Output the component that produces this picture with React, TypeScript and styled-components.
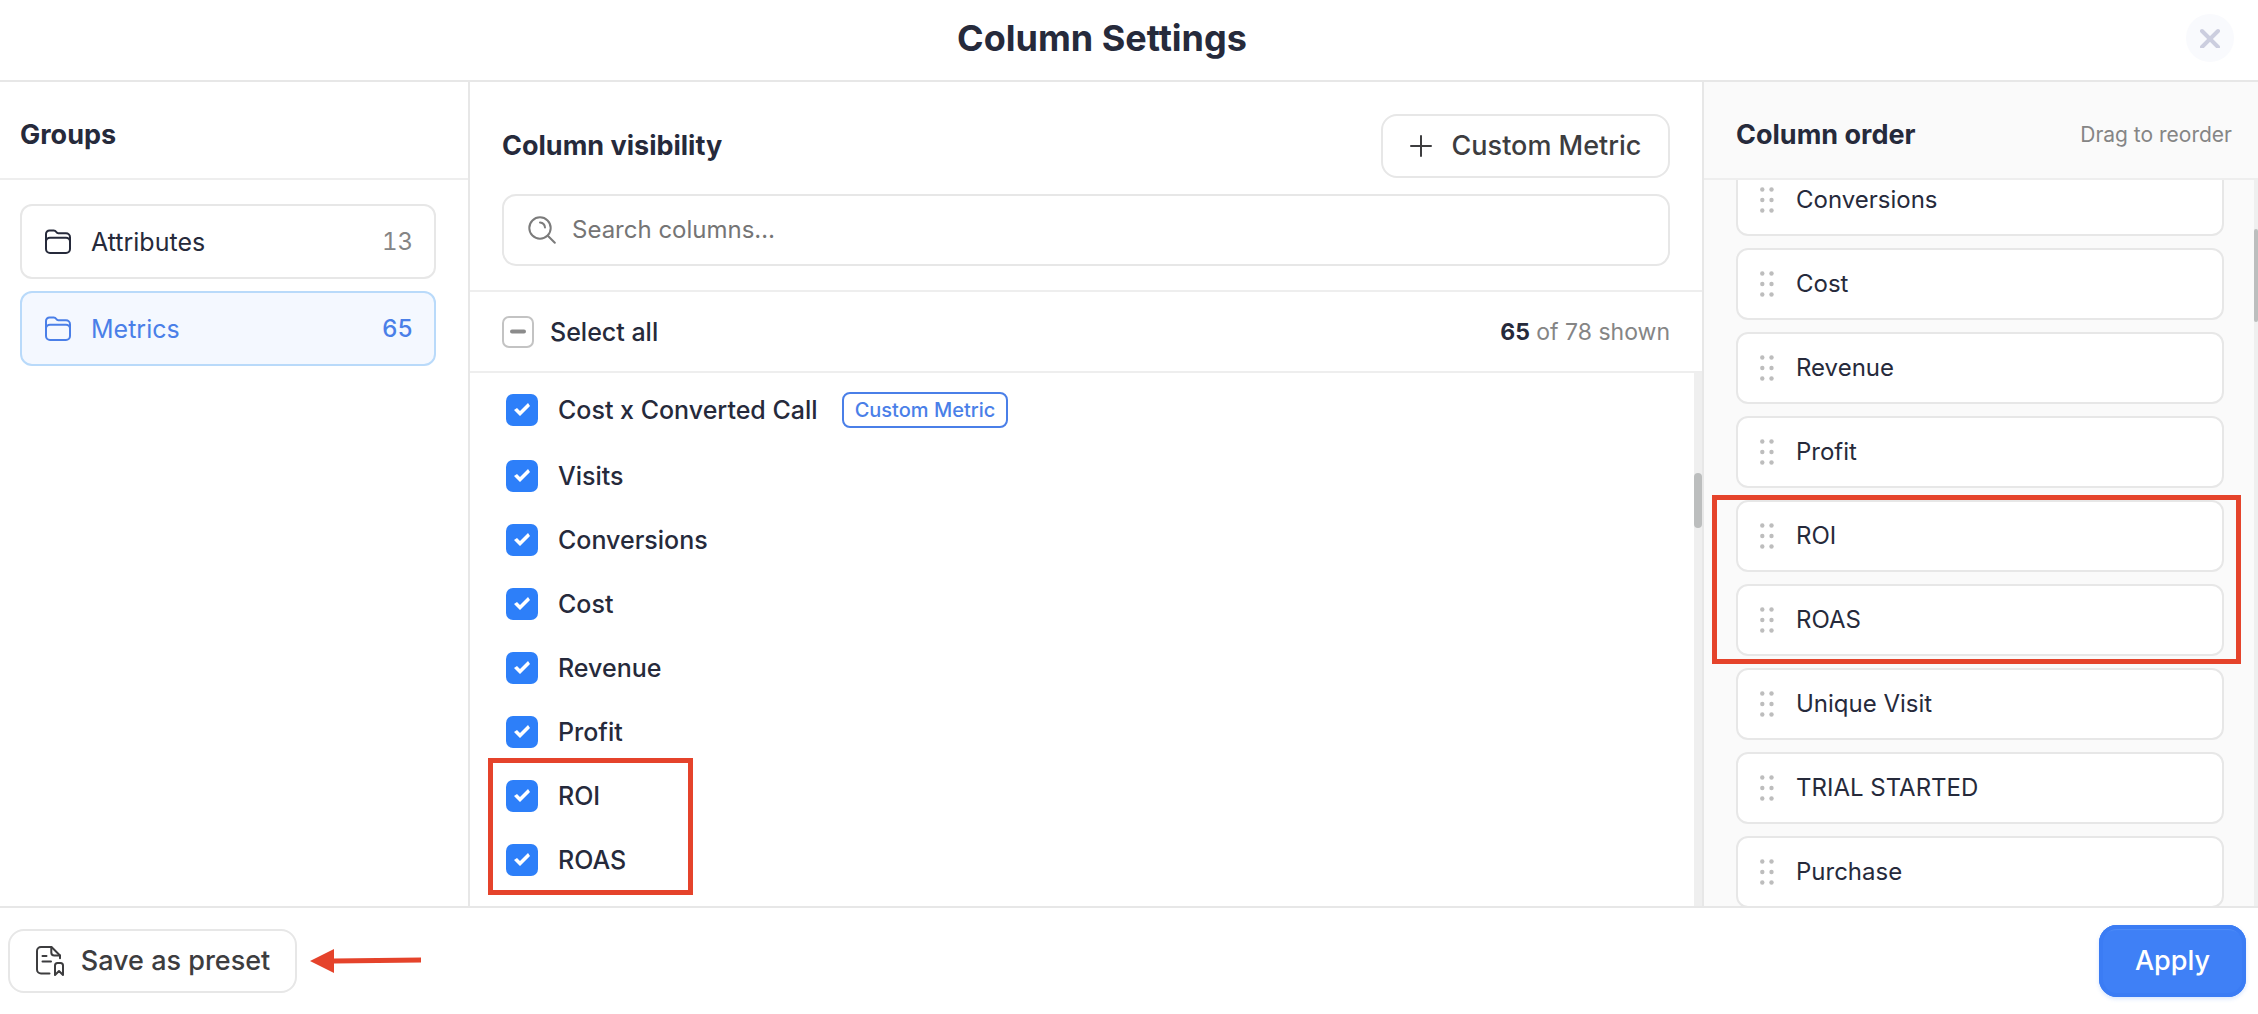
import React, { useEffect, useRef, useState } from 'react';
import styled, { createGlobalStyle, css } from 'styled-components';

const ink = '#262a3b';
const muted = '#858585';
const line = '#e7e7e7';
const softLine = '#eeeeee';
const blue = '#4a7fe8';
const callout = '#e5432b';

const GlobalStyle = createGlobalStyle`
  *, *::before, *::after { box-sizing: border-box; }
  body { margin: 0; background: #fff; }
  body, button, input {
    font-family: Inter, "Liberation Sans", sans-serif;
    color: ${ink};
  }
  h1, h2, ul { margin: 0; padding: 0; }
  ul { list-style: none; }
`;

const Dialog = styled.main`
  display: flex;
  flex-direction: column;
  height: 100vh;
  overflow: hidden;
  background: #fff;
`;

const Header = styled.header`
  display: flex;
  align-items: center;
  flex: none;
  height: 82px;
  padding: 0 24px 4px 18px;
  border-bottom: 2px solid ${line};
`;

const Title = styled.h1`
  flex: 1;
  font-size: 36px;
  line-height: 44px;
  font-weight: 700;
  text-align: center;
`;

const CloseButton = styled.button`
  display: grid;
  place-items: center;
  width: 48px;
  height: 48px;
  padding: 0;
  border: 0;
  border-radius: 50%;
  background: #f9fafd;
  color: #cccedf;
`;

const Body = styled.div`
  display: grid;
  grid-template-columns: 470px minmax(0, 1fr) 556px;
  flex: 1;
  min-height: 0;
`;

const Panel = styled.section<{ $side?: 'left' | 'right' }>`
  display: flex;
  flex-direction: column;
  min-width: 0;
  min-height: 0;
  ${p => p.$side === 'left' && css`border-right: 2px solid ${line};`}
  ${p => p.$side === 'right' && css`
    border-left: 2px solid ${line};
    background: #fafafa;
  `}
`;

const PanelHeader = styled.div<{ $inset: number }>`
  display: flex;
  align-items: center;
  justify-content: space-between;
  flex: none;
  height: 98px;
  padding: 10px 26px 0 ${p => p.$inset}px;
  border-bottom: 2px solid ${softLine};
`;

const Heading = styled.h2`
  font-size: 27px;
  line-height: 36px;
  font-weight: 650;
`;

const Hint = styled.span`
  font-size: 21px;
  line-height: 28px;
  color: ${muted};
`;

const GroupList = styled.nav`
  display: flex;
  flex-direction: column;
  gap: 12px;
  padding: 24px 32px 24px 20px;
`;

const GroupButton = styled.button<{ $active?: boolean }>`
  display: flex;
  align-items: center;
  gap: 20px;
  height: 75px;
  padding: 0 21px 0 23px;
  border: 2px solid ${p => (p.$active ? '#b9dafa' : line)};
  border-radius: 12px;
  background: ${p => (p.$active ? '#f4f8ff' : '#fff')};
  color: ${p => (p.$active ? blue : ink)};
  font-size: 25px;
  line-height: 32px;
  text-align: left;
`;

const GroupCount = styled.span<{ $active?: boolean }>`
  margin-left: auto;
  font-size: 24px;
  font-variant-numeric: tabular-nums;
  font-weight: ${p => (p.$active ? 500 : 400)};
  color: ${p => (p.$active ? blue : muted)};
`;

const Toolbar = styled.div`
  display: flex;
  flex-direction: column;
  gap: 16px;
  flex: none;
  padding: 32px 32px 24px;
  border-bottom: 2px solid ${softLine};
`;

const ToolbarRow = styled.div`
  display: flex;
  align-items: center;
  justify-content: space-between;
`;

const OutlineButton = styled.button<{ $gap: number }>`
  display: flex;
  align-items: center;
  justify-content: center;
  gap: ${p => p.$gap}px;
  width: 289px;
  height: 64px;
  padding: 0;
  border: 2px solid ${line};
  border-radius: 16px;
  background: #fff;
  color: #3d3d3f;
  font-size: 27px;
  line-height: 36px;
  font-weight: 500;
`;

const SearchBox = styled.label`
  display: flex;
  align-items: center;
  gap: 16px;
  height: 72px;
  padding: 0 24px;
  border: 2px solid ${line};
  border-radius: 14px;
  color: #7b7b7b;
`;

const SearchInput = styled.input`
  flex: 1;
  min-width: 0;
  padding: 0;
  border: 0;
  outline: 0;
  background: transparent;
  font-size: 24px;
  line-height: 32px;
  &::placeholder { color: #757575; opacity: 1; }
`;

const SelectRow = styled.div`
  display: flex;
  align-items: center;
  justify-content: space-between;
  flex: none;
  height: 81px;
  padding: 0 32px;
  border-bottom: 2px solid ${softLine};
`;

const CheckLabel = styled.label<{ $gap: number }>`
  display: inline-flex;
  align-items: center;
  gap: ${p => p.$gap}px;
  font-size: 25px;
  line-height: 32px;
  font-weight: 500;
`;

const Checkbox = styled.input.attrs({ type: 'checkbox' })`
  appearance: none;
  flex: none;
  width: 32px;
  height: 32px;
  margin: 0;
  border-radius: 7px;
  background: #fff;
  box-shadow: inset 0 0 0 2px #c3c3c3;
  &::after {
    content: '';
    display: block;
    width: 32px;
    height: 32px;
  }
  &:checked {
    background: #2d7ff9;
    box-shadow: none;
  }
  &:checked::after {
    background: #fff;
    clip-path: polygon(22px 9px, 24px 12px, 14px 22px, 8px 16px, 11px 14px, 14px 17px);
  }
  &:indeterminate::after {
    background: #8b8b8b;
    clip-path: inset(14px 8px round 2px);
  }
`;

const Shown = styled.span`
  font-size: 23px;
  line-height: 32px;
  color: ${muted};
  b { font-weight: 650; color: ${ink}; }
`;

const Scroller = styled.div`
  display: flex;
  justify-content: space-between;
  flex: 1;
  min-height: 0;
  overflow: hidden;
`;

const ScrollTrack = styled.div<{ $start: number; $width: number }>`
  flex: none;
  width: ${p => p.$width}px;
  padding-top: ${p => p.$start}px;
  background: #efefef;
`;

const ScrollThumb = styled.div<{ $length: number }>`
  height: ${p => p.$length}px;
  border-radius: 4px;
  background: #bcbebe;
`;

const MetricList = styled.ul`
  flex: 1;
  padding: 3px 36px 0;
`;

const MetricRow = styled.li`
  display: flex;
  align-items: center;
  gap: 24px;
  padding: 16px 0;
`;

const Badge = styled.span`
  padding: 0 11px;
  border: 2px solid ${blue};
  border-radius: 8px;
  font-size: 20px;
  line-height: 32px;
  font-weight: 500;
  color: ${blue};
`;

const MetricCallout = styled.div`
  position: relative;
  &::after {
    content: '';
    position: absolute;
    top: -6px;
    left: -18px;
    width: 205px;
    bottom: -3px;
    border: 5px solid ${callout};
    pointer-events: none;
  }
`;

const OrderList = styled.ul`
  flex: 1;
  display: flex;
  flex-direction: column;
  gap: 12px;
  margin-top: -16px;
  padding: 0 30px 0 32px;
`;

const OrderItem = styled.li`
  display: flex;
  align-items: center;
  flex: none;
  gap: 22px;
  height: 72px;
  padding: 0 22px;
  border: 2px solid ${line};
  border-radius: 12px;
  background: #fff;
  font-size: 24px;
  line-height: 32px;
`;

const OrderCallout = styled.div`
  position: relative;
  display: flex;
  flex-direction: column;
  gap: 12px;
  &::after {
    content: '';
    position: absolute;
    inset: -5px -17px -8px -24px;
    border: 5px solid ${callout};
    pointer-events: none;
  }
`;

const Footer = styled.footer`
  display: flex;
  align-items: center;
  gap: 12px;
  flex: none;
  height: 108px;
  padding: 0 12px 0 8px;
  border-top: 2px solid ${line};
`;

const ApplyButton = styled.button`
  width: 147px;
  height: 72px;
  margin-left: auto;
  padding: 0;
  border: 0;
  border-radius: 18px;
  background: #3f80f6;
  box-shadow: inset 0 0 0 4px #3b7cf4, inset 0 5px 1px #4f8cf8, 0 2px 4px #3f80f633;
  color: #fff;
  font-size: 27px;
  line-height: 36px;
  font-weight: 500;
`;

const FolderIcon = () => (
  <svg width="26" height="26" viewBox="0 0 26 26" fill="none" stroke="currentColor" strokeWidth="2" aria-hidden="true">
    <path d="M1 20V5a3.500 3.500 0 0 1 3.500-3.500h4.200c1.300 0 2 .6 2.600 1.500.5.800 1 1.200 2 1.200H21a4 4 0 0 1 4 4V20a4 4 0 0 1-4 4H5a4 4 0 0 1-4-4Z" />
    <path d="M1 12.500A4 4 0 0 1 5 8.700h16a4 4 0 0 1 4 3.800" />
  </svg>
);

const SearchIcon = () => (
  <svg width="28" height="28" viewBox="0 0 28 28" fill="none" stroke="currentColor" strokeWidth="2" strokeLinecap="round" aria-hidden="true">
    <circle cx="12" cy="12" r="10.700" />
    <path d="M12 6.500a5.500 5.500 0 0 1 5 5M19.800 19.800l7 7" />
  </svg>
);

const PlusIcon = () => (
  <svg width="22" height="22" viewBox="0 0 22 22" fill="none" stroke="currentColor" strokeWidth="2" strokeLinecap="round" aria-hidden="true">
    <path d="M11 1v20M1 11h20" />
  </svg>
);

const CloseIcon = () => (
  <svg width="20" height="20" viewBox="0 0 20 20" fill="none" stroke="currentColor" strokeWidth="4" strokeLinecap="round" aria-hidden="true">
    <path d="m2 3 16 16M18 3 2 19" />
  </svg>
);

const GripIcon = () => (
  <svg width="14" height="26" viewBox="0 0 14 26" fill="#bdbdbd" aria-hidden="true">
    {[2.5, 13, 23.5].map(y => (
      <React.Fragment key={y}>
        <circle cx="2.300" cy={y} r="2.200" />
        <circle cx="11.500" cy={y} r="2.200" />
      </React.Fragment>
    ))}
  </svg>
);

const PresetIcon = () => (
  <svg width="30" height="32" viewBox="0 0 30 32" fill="none" stroke="currentColor" strokeWidth="2" strokeLinecap="round" strokeLinejoin="round" aria-hidden="true">
    <path d="M14.500 28.500H6a4 4 0 0 1-4-4V6a4 4 0 0 1 4-4h10.500L25 10.500v2.800" />
    <path d="M16.300 2.300V7.500a3 3 0 0 0 3 3H25M7.500 11h4M7.500 16.500h8.500" />
    <path d="M20 30V20.500a2.500 2.500 0 0 1 2.500-2.500h3a2.500 2.500 0 0 1 2.500 2.500V30l-4-4Z" />
  </svg>
);

const ArrowMark = () => (
  <svg width="114" height="28" viewBox="0 0 114 28" fill={callout} aria-hidden="true">
    <path d="M1 14 25 2v9.500L112 10.500v5L25 16.500V26Z" />
  </svg>
);

function Metric({ name, custom }: { name: string; custom?: boolean }) {
  const [checked, setChecked] = useState(true);
  return (
    <MetricRow>
      <CheckLabel $gap={20}>
        <Checkbox checked={checked} onChange={e => setChecked(e.target.checked)} />
        {name}
      </CheckLabel>
      {custom && <Badge>Custom Metric</Badge>}
    </MetricRow>
  );
}

function Order({ name }: { name: string }) {
  return (
    <OrderItem draggable>
      <GripIcon />
      {name}
    </OrderItem>
  );
}

export default function App() {
  const selectAll = useRef<HTMLInputElement>(null);
  useEffect(() => {
    if (selectAll.current) selectAll.current.indeterminate = true;
  }, []);

  return (
    <Dialog>
      <GlobalStyle />
      <Header>
        <Title>Column Settings</Title>
        <CloseButton aria-label="Close"><CloseIcon /></CloseButton>
      </Header>
      <Body>
        <Panel $side="left">
          <PanelHeader $inset={20}><Heading>Groups</Heading></PanelHeader>
          <GroupList>
            <GroupButton><FolderIcon />Attributes<GroupCount>13</GroupCount></GroupButton>
            <GroupButton $active><FolderIcon />Metrics<GroupCount $active>65</GroupCount></GroupButton>
          </GroupList>
        </Panel>

        <Panel>
          <Toolbar>
            <ToolbarRow>
              <Heading>Column visibility</Heading>
              <OutlineButton $gap={20}><PlusIcon />Custom Metric</OutlineButton>
            </ToolbarRow>
            <SearchBox>
              <SearchIcon />
              <SearchInput type="text" placeholder="Search columns…" aria-label="Search columns" />
            </SearchBox>
          </Toolbar>
          <SelectRow>
            <CheckLabel $gap={16}>
              <Checkbox ref={selectAll} />
              Select all
            </CheckLabel>
            <Shown><b>65</b> of 78 shown</Shown>
          </SelectRow>
          <Scroller>
            <MetricList>
              <Metric name="Cost x Converted Call" custom />
              {['Visits', 'Conversions', 'Cost', 'Revenue', 'Profit'].map(n => <Metric key={n} name={n} />)}
              <li>
                <MetricCallout as="ul">
                  <Metric name="ROI" />
                  <Metric name="ROAS" />
                </MetricCallout>
              </li>
            </MetricList>
            <ScrollTrack $start={100} $width={8}><ScrollThumb $length={55} /></ScrollTrack>
          </Scroller>
        </Panel>

        <Panel $side="right">
          <PanelHeader $inset={32}>
            <Heading>Column order</Heading>
            <Hint>Drag to reorder</Hint>
          </PanelHeader>
          <Scroller>
            <OrderList>
              {['Conversions', 'Cost', 'Revenue', 'Profit'].map(n => <Order key={n} name={n} />)}
              <li>
                <OrderCallout as="ul">
                  <Order name="ROI" />
                  <Order name="ROAS" />
                </OrderCallout>
              </li>
              {['Unique Visit', 'TRIAL STARTED', 'Purchase'].map(n => <Order key={n} name={n} />)}
            </OrderList>
            <ScrollTrack $start={49} $width={4}><ScrollThumb $length={93} /></ScrollTrack>
          </Scroller>
        </Panel>
      </Body>
      <Footer>
        <OutlineButton $gap={16}><PresetIcon />Save as preset</OutlineButton>
        <ArrowMark />
        <ApplyButton>Apply</ApplyButton>
      </Footer>
    </Dialog>
  );
}
